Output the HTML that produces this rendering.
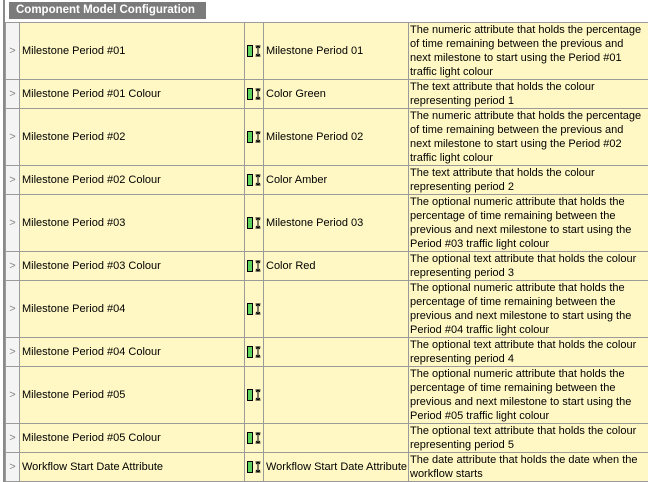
<!DOCTYPE html>
<html><head><meta charset="utf-8"><style>
html,body{margin:0;padding:0;background:#fff;width:648px;height:482px;overflow:hidden;font-family:"Liberation Sans",Tahoma,sans-serif;}
.tab{position:absolute;left:9px;top:2px;width:197px;height:17px;background:#7b7b7b;color:#fff;font-weight:bold;font-size:11.5px;line-height:17px;padding-left:7px;box-sizing:border-box;}
.lb{position:absolute;left:3px;top:0;width:2px;height:482px;background:#8a8a8a;}
table{position:absolute;left:5px;top:22px;border-collapse:collapse;table-layout:fixed;width:643px;font-size:11px;color:#000;}
td{border:1px solid #9a9a9a;padding:0 0 0 2px;vertical-align:middle;line-height:14px;overflow:hidden;white-space:nowrap;}
td.a{background:#f4f4f4;color:#888;padding:0;text-align:center;font-size:11px;}
td.n,td.v,td.d,td.i{background:#fff8c4;}
td.d{white-space:normal;padding:0 4px 0 1px;vertical-align:top;}
tr.t{height:57px}
tr.s{height:28px}
td.i{padding:0 0 0 2px}
.ic{display:inline-block;vertical-align:middle}
</style></head><body>
<div class="lb"></div>
<div class="tab">Component Model Configuration</div>
<table>
<colgroup><col style="width:14px"><col style="width:225px"><col style="width:19px"><col style="width:145px"><col style="width:240px"></colgroup>
<tbody>
<tr class="t"><td class="a">&gt;</td><td class="n">Milestone Period #01</td><td class="i"><svg class="ic" width="16" height="14"><rect x="0.5" y="1.5" width="5" height="11" fill="#5fd35f" stroke="#000"/><path d="M11 2v10M8.5 2h5M8.5 12h5M9 4l2-2 2 2M9 10l2 2 2-2" stroke="#000" fill="none"/></svg></td><td class="v">Milestone Period 01</td><td class="d">The numeric attribute that holds the percentage of time remaining between the previous and next milestone to start using the Period #01 traffic light colour</td></tr>
<tr class="s"><td class="a">&gt;</td><td class="n">Milestone Period #01 Colour</td><td class="i"><svg class="ic" width="16" height="14"><rect x="0.5" y="1.5" width="5" height="11" fill="#5fd35f" stroke="#000"/><path d="M11 2v10M8.5 2h5M8.5 12h5M9 4l2-2 2 2M9 10l2 2 2-2" stroke="#000" fill="none"/></svg></td><td class="v">Color Green</td><td class="d">The text attribute that holds the colour representing period 1</td></tr>
<tr class="t"><td class="a">&gt;</td><td class="n">Milestone Period #02</td><td class="i"><svg class="ic" width="16" height="14"><rect x="0.5" y="1.5" width="5" height="11" fill="#5fd35f" stroke="#000"/><path d="M11 2v10M8.5 2h5M8.5 12h5M9 4l2-2 2 2M9 10l2 2 2-2" stroke="#000" fill="none"/></svg></td><td class="v">Milestone Period 02</td><td class="d">The numeric attribute that holds the percentage of time remaining between the previous and next milestone to start using the Period #02 traffic light colour</td></tr>
<tr class="s"><td class="a">&gt;</td><td class="n">Milestone Period #02 Colour</td><td class="i"><svg class="ic" width="16" height="14"><rect x="0.5" y="1.5" width="5" height="11" fill="#5fd35f" stroke="#000"/><path d="M11 2v10M8.5 2h5M8.5 12h5M9 4l2-2 2 2M9 10l2 2 2-2" stroke="#000" fill="none"/></svg></td><td class="v">Color Amber</td><td class="d">The text attribute that holds the colour representing period 2</td></tr>
<tr class="t"><td class="a">&gt;</td><td class="n">Milestone Period #03</td><td class="i"><svg class="ic" width="16" height="14"><rect x="0.5" y="1.5" width="5" height="11" fill="#5fd35f" stroke="#000"/><path d="M11 2v10M8.5 2h5M8.5 12h5M9 4l2-2 2 2M9 10l2 2 2-2" stroke="#000" fill="none"/></svg></td><td class="v">Milestone Period 03</td><td class="d">The optional numeric attribute that holds the percentage of time remaining between the previous and next milestone to start using the Period #03 traffic light colour</td></tr>
<tr class="s"><td class="a">&gt;</td><td class="n">Milestone Period #03 Colour</td><td class="i"><svg class="ic" width="16" height="14"><rect x="0.5" y="1.5" width="5" height="11" fill="#5fd35f" stroke="#000"/><path d="M11 2v10M8.5 2h5M8.5 12h5M9 4l2-2 2 2M9 10l2 2 2-2" stroke="#000" fill="none"/></svg></td><td class="v">Color Red</td><td class="d">The optional text attribute that holds the colour representing period 3</td></tr>
<tr class="t"><td class="a">&gt;</td><td class="n">Milestone Period #04</td><td class="i"><svg class="ic" width="16" height="14"><rect x="0.5" y="1.5" width="5" height="11" fill="#5fd35f" stroke="#000"/><path d="M11 2v10M8.5 2h5M8.5 12h5M9 4l2-2 2 2M9 10l2 2 2-2" stroke="#000" fill="none"/></svg></td><td class="v"></td><td class="d">The optional numeric attribute that holds the percentage of time remaining between the previous and next milestone to start using the Period #04 traffic light colour</td></tr>
<tr class="s"><td class="a">&gt;</td><td class="n">Milestone Period #04 Colour</td><td class="i"><svg class="ic" width="16" height="14"><rect x="0.5" y="1.5" width="5" height="11" fill="#5fd35f" stroke="#000"/><path d="M11 2v10M8.5 2h5M8.5 12h5M9 4l2-2 2 2M9 10l2 2 2-2" stroke="#000" fill="none"/></svg></td><td class="v"></td><td class="d">The optional text attribute that holds the colour representing period 4</td></tr>
<tr class="t"><td class="a">&gt;</td><td class="n">Milestone Period #05</td><td class="i"><svg class="ic" width="16" height="14"><rect x="0.5" y="1.5" width="5" height="11" fill="#5fd35f" stroke="#000"/><path d="M11 2v10M8.5 2h5M8.5 12h5M9 4l2-2 2 2M9 10l2 2 2-2" stroke="#000" fill="none"/></svg></td><td class="v"></td><td class="d">The optional numeric attribute that holds the percentage of time remaining between the previous and next milestone to start using the Period #05 traffic light colour</td></tr>
<tr class="s"><td class="a">&gt;</td><td class="n">Milestone Period #05 Colour</td><td class="i"><svg class="ic" width="16" height="14"><rect x="0.5" y="1.5" width="5" height="11" fill="#5fd35f" stroke="#000"/><path d="M11 2v10M8.5 2h5M8.5 12h5M9 4l2-2 2 2M9 10l2 2 2-2" stroke="#000" fill="none"/></svg></td><td class="v"></td><td class="d">The optional text attribute that holds the colour representing period 5</td></tr>
<tr class="s"><td class="a">&gt;</td><td class="n">Workflow Start Date Attribute</td><td class="i"><svg class="ic" width="16" height="14"><rect x="0.5" y="1.5" width="5" height="11" fill="#5fd35f" stroke="#000"/><path d="M11 2v10M8.5 2h5M8.5 12h5M9 4l2-2 2 2M9 10l2 2 2-2" stroke="#000" fill="none"/></svg></td><td class="v">Workflow Start Date Attribute</td><td class="d">The date attribute that holds the date when the workflow starts</td></tr>
</tbody></table>
</body></html>
